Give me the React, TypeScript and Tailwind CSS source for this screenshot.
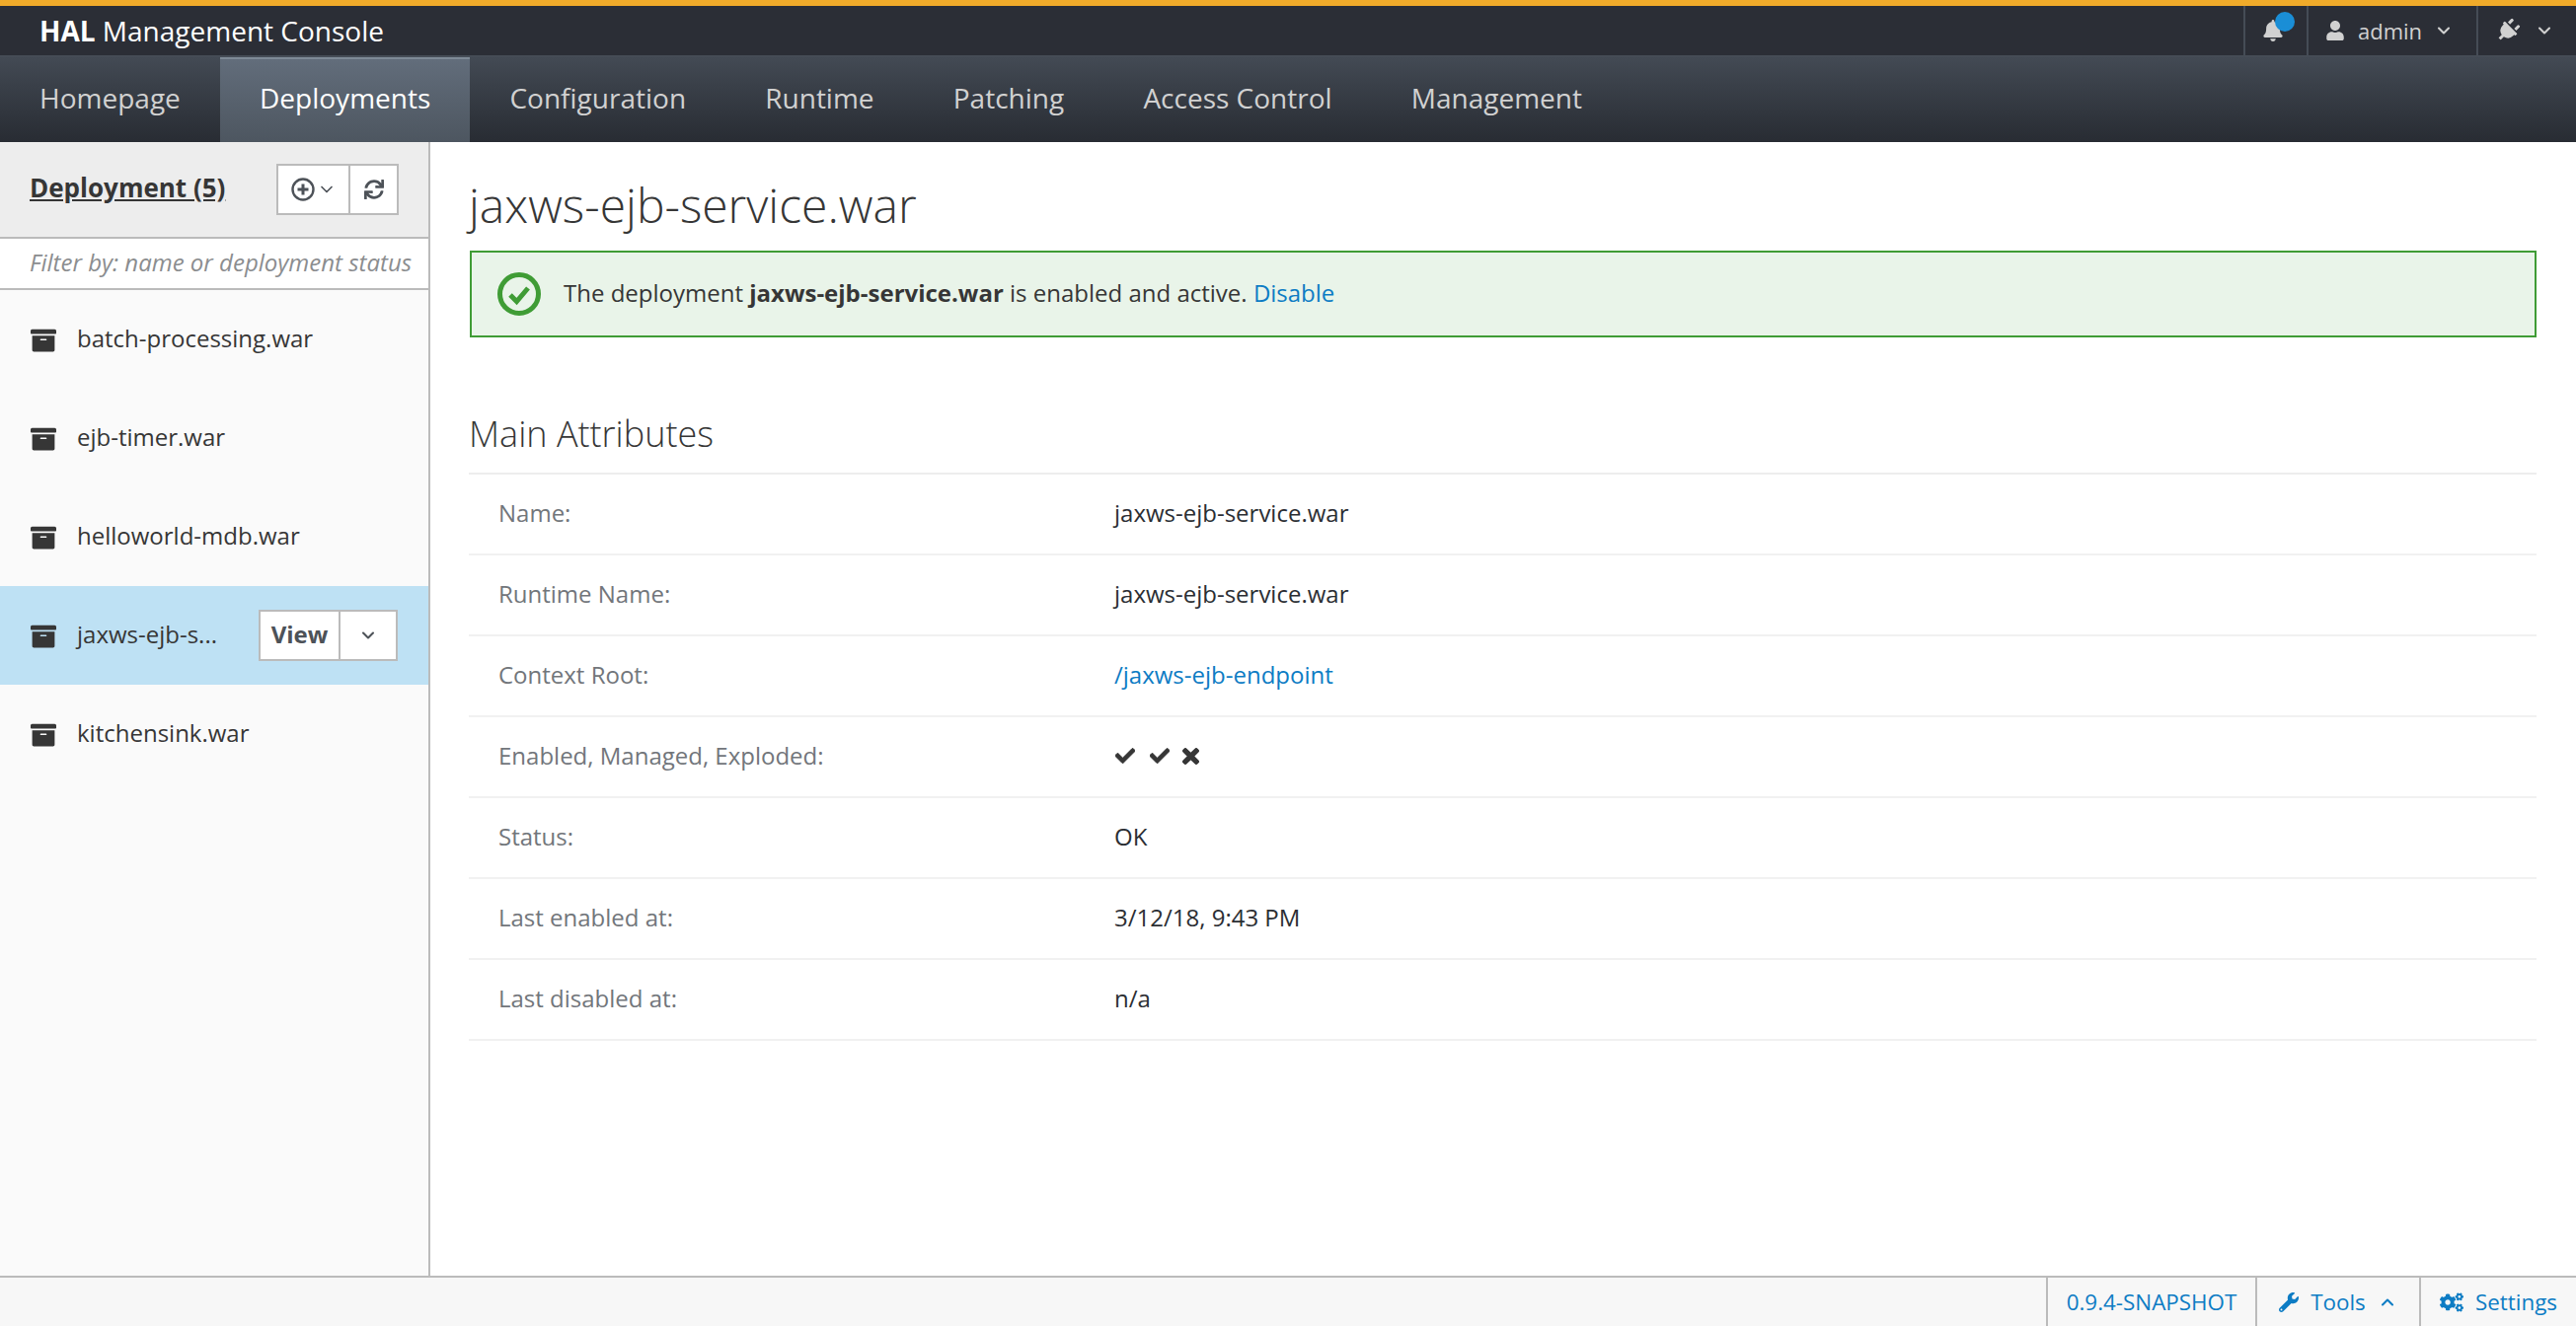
import { FaArchive, FaBell, FaCheck, FaCogs, FaPlug, FaSync, FaTimes, FaUser, FaWrench } from 'react-icons/fa';
import { LuChevronDown, LuChevronUp } from 'react-icons/lu';

const tabs = ['Homepage', 'Deployments', 'Configuration', 'Runtime', 'Patching', 'Access Control', 'Management'];
const deployments = ['batch-processing.war', 'ejb-timer.war', 'helloworld-mdb.war', 'jaxws-ejb-service.war', 'kitchensink.war'];

function Attribute({ label, children }: { label: string; children: React.ReactNode }) {
  return (
    <div className="flex h-[82px] items-center border-b-2 border-[#f1f1f1] pb-[2px] text-[24px]">
      <div className="w-[654px] pl-[30px] text-[#72767b]">{label}</div>
      <div className="text-[#2b2e33]">{children}</div>
    </div>
  );
}

export default function App() {
  return (
    <div className="flex h-[1344px] flex-col overflow-hidden bg-white font-['Open_Sans',sans-serif] text-[24px] text-[#363636]">
      {/* masthead */}
      <header className="flex h-[56px] shrink-0 items-stretch border-t-[6px] border-[#f0ab2a] bg-[#2b2e36] text-[#d1d1d1]">
        <div className="flex-1 pl-[40px] text-[28px] leading-[50px] text-white">
          <span className="font-bold">HAL</span> Management Console
        </div>
        <div className="relative flex w-[64px] items-center justify-center border-l-2 border-[#454c56]">
          <FaBell className="mr-[6px] text-[22px] text-[#d1d1d1]" />
          <span className="absolute left-[30px] top-[6px] h-[20px] w-[20px] rounded-full bg-[#1a8ed6]" />
        </div>
        <div className="flex w-[172px] items-center border-l-2 border-[#454c56] pl-[17px]">
          <FaUser className="mr-[13px] text-[20px]" />
          <span className="text-[22px]">admin</span>
          <LuChevronDown className="ml-[12px] text-[20px]" strokeWidth={2.5} />
        </div>
        <div className="flex w-[101px] items-center border-l-2 border-[#454c56] pl-[18px]">
          <FaPlug className="rotate-45 text-[24px]" />
          <LuChevronDown className="ml-[15px] text-[20px]" strokeWidth={2.5} />
        </div>
      </header>

      {/* nav */}
      <nav className="flex h-[88px] shrink-0 border-t-2 border-[#454c56] bg-gradient-to-b from-[#434a54] to-[#282c33] text-[28px] text-[#d1d1d1]">
        {tabs.map((tab) => (
          <div
            key={tab}
            className={
              tab === 'Deployments'
                ? 'flex items-center border-t-2 border-[#7e8a96] bg-gradient-to-b from-[#626d7b] to-[#4d5660] px-[40.1px] pb-[7px] text-white'
                : 'flex items-center px-[40.1px] pb-[5px]'
            }
          >
            {tab}
          </div>
        ))}
      </nav>

      <div className="flex min-h-0 flex-1">
        {/* sidebar */}
        <aside className="flex w-[436px] shrink-0 flex-col border-r-2 border-[#bbbbbb] bg-[#fafafa]">
          <div className="flex h-[98px] shrink-0 items-center justify-between border-b-2 border-[#bbbbbb] bg-[#ededed] pl-[30px] pr-[30px]">
            <span className="pb-[4px] text-[26px] font-bold text-[#363636] underline">Deployment (5)</span>
            <div className="flex h-[52px] w-[124px] border-2 border-[#bbbbbb] bg-white text-[#4d5258]">
              <div className="flex w-[73px] items-center justify-center gap-[2px] border-r-2 border-[#bbbbbb]">
                <svg width="24" height="24" viewBox="0 0 24 24" fill="none" stroke="currentColor" strokeWidth="2.4">
                  <circle cx="12" cy="12" r="10.5" />
                  <path d="M12 6.5v11M6.5 12h11" strokeWidth="3" />
                </svg>
                <LuChevronDown className="text-[20px]" />
              </div>
              <div className="flex flex-1 items-center justify-center">
                <FaSync className="text-[20px]" />
              </div>
            </div>
          </div>
          <div className="h-[52px] shrink-0 border-b-2 border-[#bbbbbb] bg-white pl-[30px] text-[24px] italic leading-[47px] text-[#8b8d8f]">
            Filter by: name or deployment status
          </div>
          {deployments.map((name) => {
            const active = name === 'jaxws-ejb-service.war';
            return (
              <div key={name} className={`flex h-[100px] shrink-0 items-center pl-[31px] ${active ? 'bg-[#bee1f4]' : ''}`}>
                <FaArchive className="mr-[21px] mt-[2px] shrink-0 text-[26px] text-[#363636]" />
                {active ? (
                  <>
                    <span className="w-[184px] pb-[3px]">jaxws-ejb-s...</span>
                    <div className="flex h-[52px] w-[141px] border-2 border-[#bbbbbb] bg-white text-[#4d5258]">
                      <div className="flex w-[81px] items-center justify-center border-r-2 border-[#bbbbbb] pb-[3px] font-bold">View</div>
                      <div className="flex flex-1 items-center justify-center">
                        <LuChevronDown className="text-[20px]" strokeWidth={2.5} />
                      </div>
                    </div>
                  </>
                ) : (
                  <span className="pb-[3px]">{name}</span>
                )}
              </div>
            );
          })}
        </aside>

        {/* main */}
        <main className="min-w-0 flex-1 pl-[39px] pr-[40px]">
          <h1 className="mt-[32px] text-[48px] font-light leading-[64px] text-[#363636]">jaxws-ejb-service.war</h1>
          <div className="ml-[1px] mt-[14px] flex h-[88px] items-center border-2 border-[#3f9c35] bg-[#e9f4e9] pb-[2px] pl-[26px]">
            <svg className="mr-[23px] mt-[2px]" width="44" height="44" viewBox="0 0 44 44" fill="none">
              <circle cx="22" cy="22" r="19.5" stroke="#3f9c35" strokeWidth="5" />
              <path d="M13 23l6.5 6.5L31 16" stroke="#3f9c35" strokeWidth="5" />
            </svg>
            <span>
              The deployment <b>jaxws-ejb-service.war</b> is enabled and active. <span className="text-[#0d7cc4]">Disable</span>
            </span>
          </div>
          <h2 className="mt-[73px] h-[66px] border-b-2 border-[#ededed] text-[36px] font-light leading-[50px] text-[#363636]">
            Main Attributes
          </h2>
          <Attribute label="Name:">jaxws-ejb-service.war</Attribute>
          <Attribute label="Runtime Name:">jaxws-ejb-service.war</Attribute>
          <Attribute label="Context Root:">
            <span className="text-[#0d7cc4]">/jaxws-ejb-endpoint</span>
          </Attribute>
          <Attribute label="Enabled, Managed, Exploded:">
            <div className="ml-[1px] flex items-center gap-[15px] text-[20px] text-[#363636]">
              <FaCheck stroke="currentColor" strokeWidth={24} />
              <FaCheck stroke="currentColor" strokeWidth={24} />
              <FaTimes className="-ml-[5px] text-[23px]" stroke="currentColor" strokeWidth={24} />
            </div>
          </Attribute>
          <Attribute label="Status:">OK</Attribute>
          <Attribute label="Last enabled at:">3/12/18, 9:43 PM</Attribute>
          <Attribute label="Last disabled at:">n/a</Attribute>
        </main>
      </div>

      {/* footer */}
      <footer className="flex h-[51px] shrink-0 justify-end border-t-2 border-[#bbbbbb] bg-[#f7f7f7] text-[22.4px] text-[#0d7cc4]">
        <div className="flex w-[212px] items-center justify-center border-l-2 border-[#bbbbbb]">0.9.4-SNAPSHOT</div>
        <div className="flex w-[166px] items-center justify-center gap-[12px] border-l-2 border-[#bbbbbb]">
          <FaWrench className="text-[20px]" />
          Tools
          <LuChevronUp className="text-[20px]" strokeWidth={2.5} />
        </div>
        <div className="flex w-[159px] items-center justify-center gap-[12px] border-l-2 border-[#bbbbbb]">
          <FaCogs className="text-[24px]" />
          Settings
        </div>
      </footer>
    </div>
  );
}
